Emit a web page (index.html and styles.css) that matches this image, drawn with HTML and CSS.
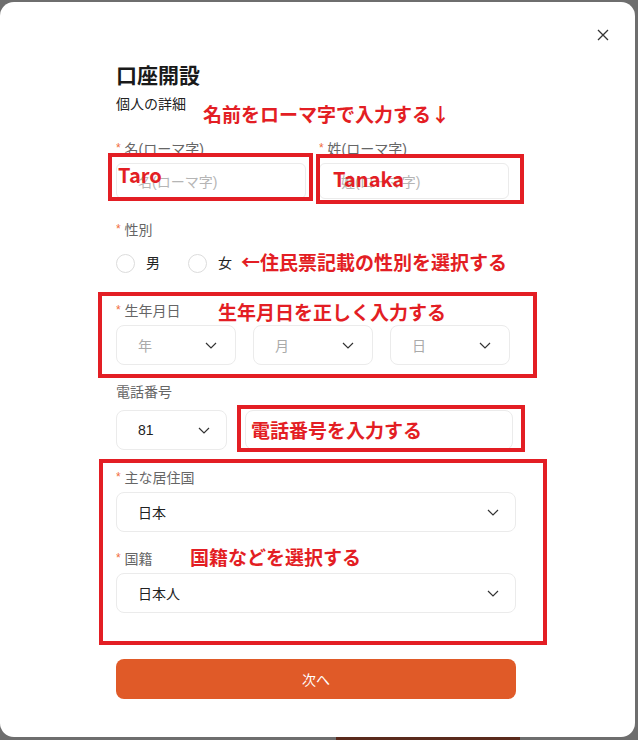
FILE: index.html
```html
<!DOCTYPE html>
<html lang="ja">
<head>
  <meta charset="UTF-8">
  <title>口座開設</title>
  <link rel="stylesheet" href="styles.css">
</head>
<body>
  <div class="modal">
    <button class="close" aria-label="閉じる">
      <svg width="12" height="12" viewBox="0 0 12 12"><path d="M1 1L11 11M11 1L1 11" stroke="#333" stroke-width="1.3" fill="none"/></svg>
    </button>

    <h2 class="title">口座開設</h2>
    <p class="subtitle">個人の詳細</p>

    <div class="field field-name">
      <div class="row two">
        <div>
          <div class="label"><span class="star">*</span> 名(ローマ字)</div>
          <div class="input placeholder">名(ローマ字)</div>
        </div>
        <div>
          <div class="label"><span class="star">*</span> 姓(ローマ字)</div>
          <div class="input placeholder">姓(ローマ字)</div>
        </div>
      </div>
    </div>

    <div class="field field-gender">
      <div class="label"><span class="star">*</span> 性別</div>
      <div class="radios">
        <div class="radio"><span class="circle"></span>男</div>
        <div class="radio"><span class="circle"></span>女</div>
      </div>
    </div>

    <div class="field field-birth">
      <div class="label"><span class="star">*</span> 生年月日</div>
      <div class="row three">
        <div class="select placeholder">年<svg class="chev" width="12" height="7" viewBox="0 0 12 7"><path d="M1 1L6 6L11 1" stroke="#333" stroke-width="1.2" fill="none"/></svg></div>
        <div class="select placeholder">月<svg class="chev" width="12" height="7" viewBox="0 0 12 7"><path d="M1 1L6 6L11 1" stroke="#333" stroke-width="1.2" fill="none"/></svg></div>
        <div class="select placeholder">日<svg class="chev" width="12" height="7" viewBox="0 0 12 7"><path d="M1 1L6 6L11 1" stroke="#333" stroke-width="1.2" fill="none"/></svg></div>
      </div>
    </div>

    <div class="field field-phone">
      <div class="label">電話番号</div>
      <div class="row phone">
        <div class="select">81<svg class="chev" width="12" height="7" viewBox="0 0 12 7"><path d="M1 1L6 6L11 1" stroke="#333" stroke-width="1.2" fill="none"/></svg></div>
        <div class="select"></div>
      </div>
    </div>

    <div class="field field-country">
      <div class="label"><span class="star">*</span> 主な居住国</div>
      <div class="select">日本<svg class="chev" width="12" height="7" viewBox="0 0 12 7"><path d="M1 1L6 6L11 1" stroke="#333" stroke-width="1.2" fill="none"/></svg></div>
    </div>

    <div class="field field-nation">
      <div class="label"><span class="star">*</span> 国籍</div>
      <div class="select">日本人<svg class="chev" width="12" height="7" viewBox="0 0 12 7"><path d="M1 1L6 6L11 1" stroke="#333" stroke-width="1.2" fill="none"/></svg></div>
    </div>

    <button class="next">次へ</button>

    <!-- red annotations drawn over the form -->
    <div class="mark m1"></div>
    <div class="mark m2"></div>
    <div class="mark m3"></div>
    <div class="mark m4"></div>
    <div class="mark m5"></div>
    <div class="note n1">名前をローマ字で入力する↓</div>
    <div class="note name n-taro">Taro</div>
    <div class="note name n-tanaka">Tanaka</div>
    <div class="note n2">←住民票記載の性別を選択する</div>
    <div class="note n3">生年月日を正しく入力する</div>
    <div class="note n4">電話番号を入力する</div>
    <div class="note n5">国籍などを選択する</div>
  </div>
  <div class="page-strip"></div>
</body>
</html>
```

FILE: styles.css
```css
body {
  margin: 0;
  background: #6e6e6e;
  font-family: "Liberation Sans", "Noto Sans CJK JP", sans-serif;
  color: #222;
  overflow: hidden;
  height: 740px;
}
.modal {
  position: relative;
  box-sizing: border-box;
  margin-top: 2px;
  width: 635px;
  height: 735px;
  background: #fff;
  border-radius: 14px;
  padding: 58px 119px 0 116px;
}
.close {
  position: absolute;
  top: 27px;
  right: 26px;
  width: 12px;
  height: 12px;
  padding: 0;
  border: none;
  background: none;
  display: flex;
}
.title {
  margin: 0;
  font-family: "Noto Sans CJK JP", sans-serif;
  font-size: 21px;
  line-height: 28px;
  font-weight: 700;
  color: #1a1a1a;
}
.subtitle {
  margin: 6px 0 0;
  font-size: 14px;
  line-height: 20px;
  height: 20px;
  color: #222;
}
.label {
  height: 20px;
  font-size: 14px;
  line-height: 20px;
  color: #666;
  margin-bottom: 4px;
  overflow: hidden;
}
.star {
  color: #f26b3a;
  font-size: 12px;
  line-height: 1;
  vertical-align: 2px;
}
.field-name { margin-top: 25px; }
.field-gender { margin-top: 21px; }
.field-birth { margin-top: 28px; }
.field-phone { margin-top: 17px; }
.field-phone .label { margin-bottom: 8px; }
.field-country { margin-top: 18px; }
.field-nation { margin-top: 17px; }
.row {
  display: grid;
}
.row.two {
  grid-template-columns: 190px 190px;
  column-gap: 13px;
}
.row.three {
  grid-template-columns: 120px 120px 120px;
  column-gap: 17px;
}
.row.phone {
  grid-template-columns: 111px 268px;
  column-gap: 18px;
}
.input {
  box-sizing: border-box;
  height: 36px;
  border: 1px solid #ebebeb;
  border-radius: 6px;
  padding: 0 21px;
  font-size: 14px;
  display: flex;
  align-items: center;
}
.placeholder {
  color: #b5b5b5;
}
.select {
  box-sizing: border-box;
  height: 40px;
  border: 1px solid #ebebeb;
  border-radius: 8px;
  padding: 0 16px 0 21px;
  font-size: 14px;
  color: #222;
  display: flex;
  align-items: center;
  justify-content: space-between;
}
.select.placeholder {
  color: #aaa;
  padding-right: 18px;
}
.radios {
  display: flex;
  gap: 28px;
  margin-top: 14px;
  height: 19px;
}
.radio {
  display: flex;
  align-items: center;
  gap: 11px;
  font-size: 14px;
  line-height: 19px;
  color: #222;
}
.circle {
  box-sizing: border-box;
  width: 19px;
  height: 19px;
  border: 1px solid #dcdcdc;
  border-radius: 50%;
}
.next {
  display: block;
  width: 400px;
  height: 40px;
  margin-top: 46px;
  border: none;
  border-radius: 8px;
  background: #e05a28;
  color: #fff;
  font-family: "Liberation Sans", "Noto Sans CJK JP", sans-serif;
  font-size: 14px;
}
.mark {
  position: absolute;
  box-sizing: border-box;
  border: 4px solid #e31e24;
}
.m1 { left: 108px; top: 151px; width: 205px; height: 48px; }
.m2 { left: 316px; top: 152px; width: 208px; height: 50px; }
.m3 { left: 98px; top: 290px; width: 439px; height: 86px; }
.m4 { left: 237px; top: 403px; width: 288px; height: 47px; }
.m5 { left: 99px; top: 457px; width: 448px; height: 186px; }
.note {
  position: absolute;
  font-family: "Noto Sans CJK JP", sans-serif;
  font-weight: 700;
  font-size: 19px;
  line-height: 19px;
  color: #e31e24;
  white-space: nowrap;
}
.note.name {
  font-size: 20px;
  line-height: 20px;
}
.n1 { left: 203px; top: 102px; }
.n-taro { left: 118px; top: 163px; }
.n-tanaka { left: 333px; top: 167px; }
.n2 { left: 241px; top: 250px; }
.n3 { left: 218px; top: 300px; }
.n4 { left: 251px; top: 418px; }
.n5 { left: 190px; top: 545px; }
.page-strip {
  margin-left: 336px;
  width: 184px;
  height: 3px;
  background: #5a2a1c;
}
```
